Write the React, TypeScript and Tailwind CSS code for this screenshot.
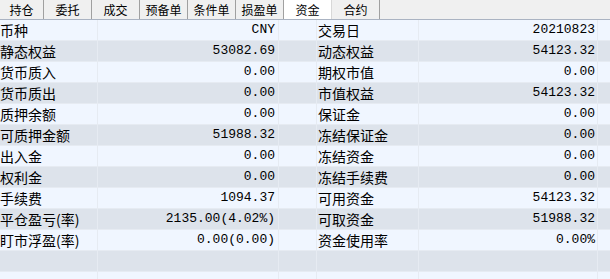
import React from 'react';

const tabs = ['持仓', '委托', '成交', '预备单', '条件单', '损盈单', '资金', '合约'];

const rows: [string, string, string, string][] = [
  ['币种', 'CNY', '交易日', '20210823'],
  ['静态权益', '53082.69', '动态权益', '54123.32'],
  ['货币质入', '0.00', '期权市值', '0.00'],
  ['货币质出', '0.00', '市值权益', '54123.32'],
  ['质押余额', '0.00', '保证金', '0.00'],
  ['可质押金额', '51988.32', '冻结保证金', '0.00'],
  ['出入金', '0.00', '冻结资金', '0.00'],
  ['权利金', '0.00', '冻结手续费', '0.00'],
  ['手续费', '1094.37', '可用资金', '54123.32'],
  ['平仓盈亏(率)', '2135.00(4.02%)', '可取资金', '51988.32'],
  ['盯市浮盈(率)', '0.00(0.00)', '资金使用率', '0.00%'],
  ['', '', '', ''],
  ['', '', '', ''],
];

const cjk = "font-['SimSun','Noto_Sans_CJK_SC',sans-serif]";
const mono = "font-['Liberation_Mono','Noto_Sans_CJK_SC',monospace]";

export default function App() {
  return (
    <div className="w-[610px] h-[279px] overflow-hidden bg-[#f0f6ff] text-black">
      {/* tab strip */}
      <div className={`flex h-[20px] bg-[#f0f0f0] border-b border-[#aab3c2] text-[12px] leading-[19px] ${cjk}`}>
        {tabs.map((t, i) => (
          <div
            key={t}
            className={`${i === 0 ? 'w-[44px]' : 'w-[48px]'} text-center border-r border-[#a0a0a0] ${
              t === '资金' ? 'bg-white border-r-[#d8d8d8]' : ''
            }`}
          >
            {t}
          </div>
        ))}
      </div>

      {/* fund table */}
      <div>
        {rows.map((r, i) => (
          <div
            key={i}
            className={`flex h-[21px] items-center border-b border-[#e6ebf2] ${
              i % 2 === 1 ? 'bg-[#dde3eb]' : 'bg-[#f0f6ff]'
            }`}
          >
            <div className={`w-[98px] h-full pl-[0px] border-r border-[#e6ebf2] text-[14px] leading-[20px] whitespace-nowrap overflow-hidden ${cjk}`}>
              {r[0]}
            </div>
            <div className={`w-[181px] h-full pr-[3px] border-r border-[#e6ebf2] text-right text-[13px] leading-[20px] whitespace-nowrap ${mono}`}>
              {r[1]}
            </div>
            <div className="w-[38px] h-full border-r border-[#e6ebf2]" />
            <div className={`w-[102px] h-full pl-[1px] border-r border-[#e6ebf2] text-[14px] leading-[20px] whitespace-nowrap ${cjk}`}>
              {r[2]}
            </div>
            <div className={`w-[179px] h-full pr-[2px] border-r border-[#e6ebf2] text-right text-[13px] leading-[20px] whitespace-nowrap ${mono}`}>
              {r[3]}
            </div>
            <div className="flex-1 h-full" />
          </div>
        ))}
      </div>
    </div>
  );
}
